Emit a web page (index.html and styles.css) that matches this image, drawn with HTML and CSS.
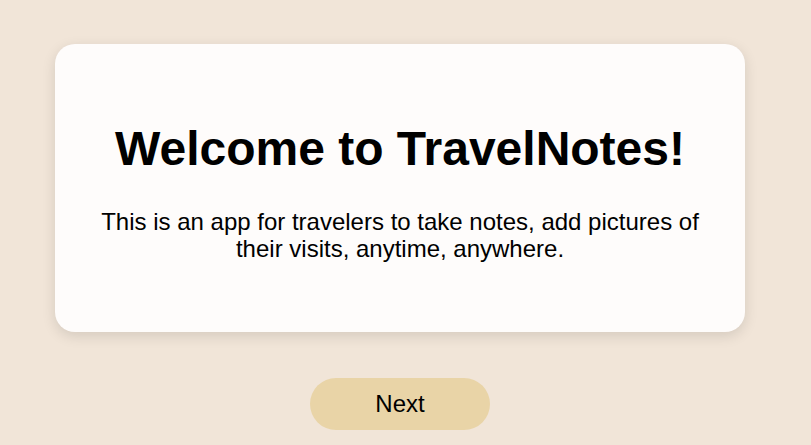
FILE: index.html
```html
<!DOCTYPE html>
<html>
<head>
<meta charset="utf-8">
<link rel="stylesheet" href="styles.css">
</head>
<body>
<main class="page">
  <section class="card">
    <h1 class="title">Welcome to TravelNotes!</h1>
    <p class="intro">This is an app for travelers to take notes, add pictures of their visits, anytime, anywhere.</p>
  </section>
  <button class="next">Next</button>
</main>
</body>
</html>
```

FILE: styles.css
```css
html, body {
  margin: 0;
  padding: 0;
  background: #f1e5d8;
  font-family: "Liberation Sans", Arial, sans-serif;
  color: #000;
}
.page {
  width: 690px;
  padding: 44px 66px 0 55px;
  display: flex;
  flex-direction: column;
  align-items: center;
}
.card {
  box-sizing: border-box;
  width: 690px;
  height: 288px;
  padding: 78px 40px 0;
  background: #fefcfb;
  border-radius: 20px;
  box-shadow: 0 4px 14px rgba(0, 0, 0, 0.12);
  text-align: center;
}
.title {
  margin: 0;
  font-size: 48px;
  font-weight: bold;
  line-height: 54px;
}
.intro {
  margin: 32px 0 0;
  font-size: 24px;
  line-height: 27px;
}
.next {
  margin-top: 46px;
  width: 180px;
  height: 52px;
  border: none;
  border-radius: 26px;
  background: #e9d4a7;
  font-family: "Liberation Sans", Arial, sans-serif;
  font-size: 24px;
  color: #000;
  padding: 0;
}
```
